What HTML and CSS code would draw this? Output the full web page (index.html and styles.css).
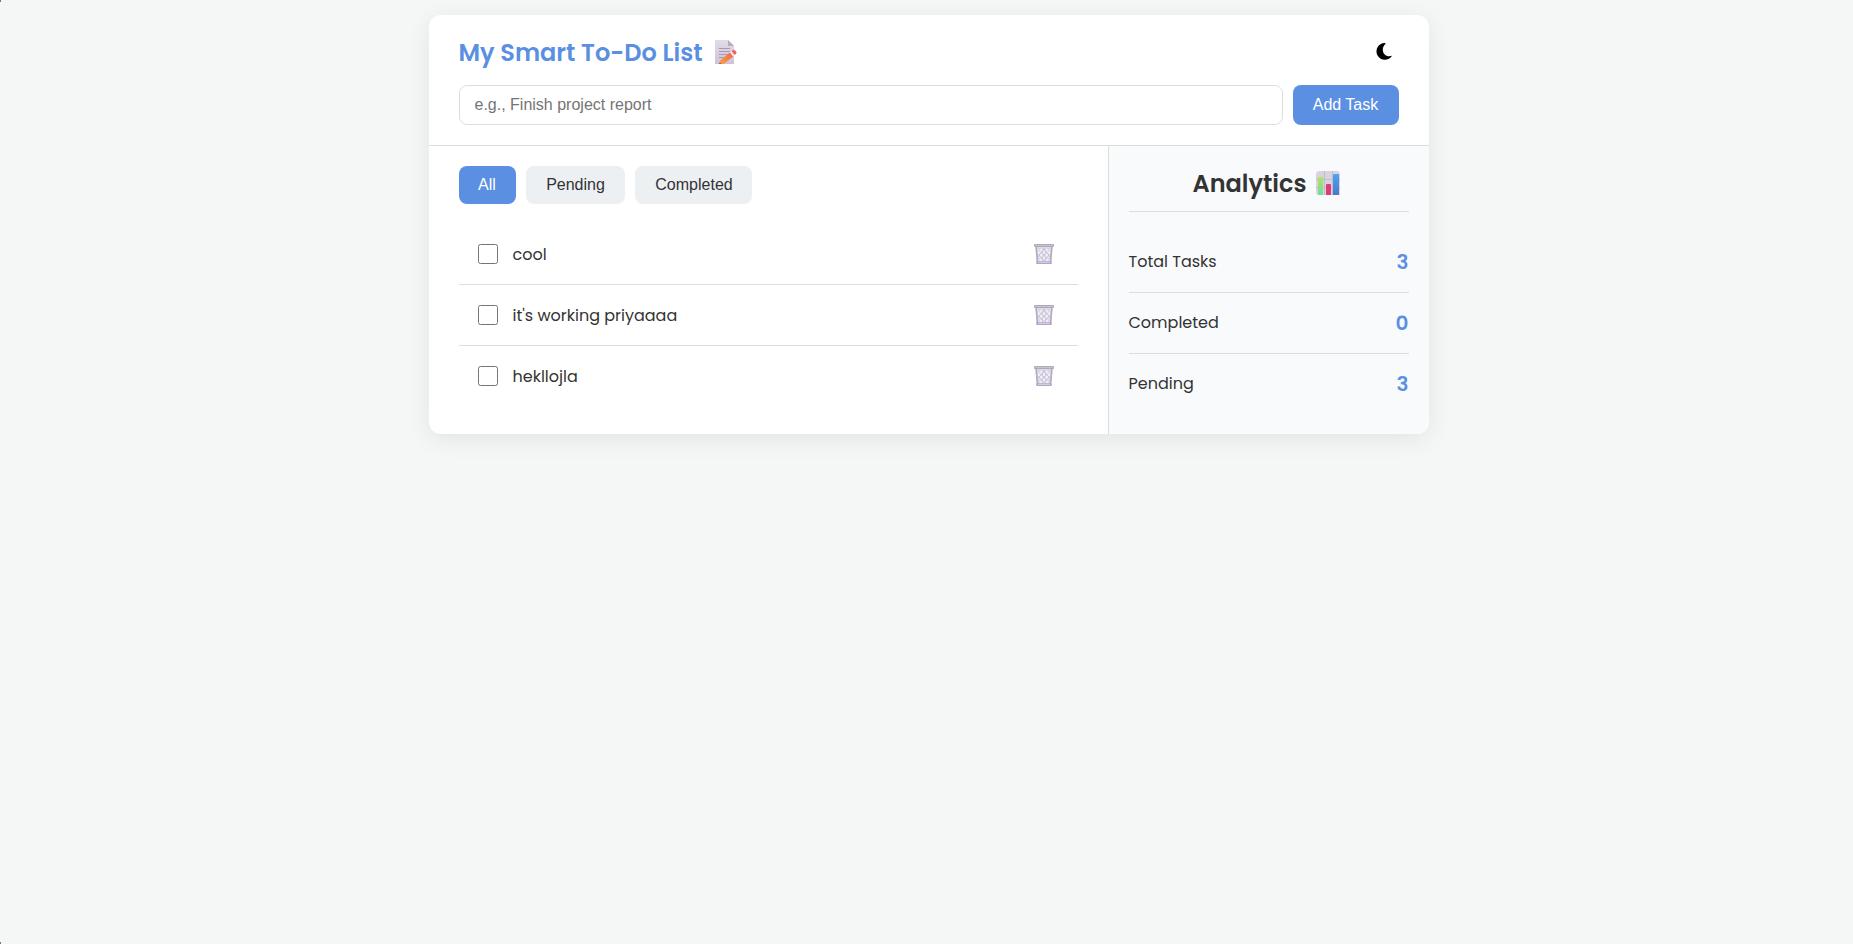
FILE: index.html
```html
<!DOCTYPE html>
<html lang="en">
<head>
<meta charset="utf-8">
<title>My Smart To-Do List</title>
<link rel="stylesheet" href="styles.css">
</head>
<body>
<svg width="0" height="0" class="defs">
  <defs>
    <symbol id="trash" viewBox="0 0 20 20">
      <path d="M1.300 2h17.400l-1.500 16.300q-.1 1.200-1.100 1.200H3.900q-1 0-1.100-1.200z" fill="#dfdbea"/>
      <path d="M2.200 3 3.500 18M17.800 3 16.500 18" stroke="#b3adbe" stroke-width="1.700"/>
      <path d="M5.500 4l8 13M9.500 4l6 8.500M4.500 9l5 8.500M14.500 4l-8 13M10.500 4l-6 8.500M15.500 9l-5 8.500" stroke="#c3bdd2" stroke-width=".8"/>
      <path d="M7 5v2.500M7 10v2.500M7 15v2M10 7.500V10M10 12.500V15M13 5v2.500M13 10v2.500M13 15v2M4.800 7.500V10M15.200 7.500V10" stroke="#fff" stroke-width="1.200"/>
      <rect x="0" y="0" width="20" height="2.900" rx=".8" fill="#aea9b6"/>
      <rect x="1" y=".9" width="18" height="1" fill="#c9c6cc"/>
      <rect x="2.200" y="17.300" width="15.600" height="2.700" rx=".8" fill="#b3a3c8"/>
      <path d="M4 18.300h12" stroke="#dcd6e6" stroke-width="1"/>
    </symbol>
  </defs>
</svg>
<main class="card">
  <header class="header">
    <div class="title-row">
      <h1 class="title"><span class="title-text">My Smart To-Do List</span>
        <svg class="memo" viewBox="0 0 22 24">
          <defs>
            <linearGradient id="paper" x1="0" x2="0" y1="0" y2="1"><stop offset="0" stop-color="#e1dbe7"/><stop offset="1" stop-color="#cfc3db"/></linearGradient>
            <linearGradient id="pencil" x1="0" x2="1" y1="1" y2="0"><stop offset="0" stop-color="#ffa04a"/><stop offset="1" stop-color="#ee673e"/></linearGradient>
          </defs>
          <path d="M0 0h13l6 6v18H0z" fill="url(#paper)"/>
          <path d="M13 0l6 6h-6z" fill="#b8acc5"/>
          <path d="M4 8.500h11M4 11.500h11M4 14.500h9M4 17.500h6" stroke="#a69cb1" stroke-width="1"/>
          <path d="M5.300 20.300 15 12.500l3.200 4-9.500 7.500H4.400z" fill="url(#pencil)"/>
          <path d="M15 12.500l1.700-1.300 3.100 3.900-1.600 1.400z" fill="#eee3ee"/>
          <path d="M16.700 11.200l1.500-1.200q1-.6 1.900.4l1.100 1.400q.8 1.100-.1 1.900l-1.300 1.400z" fill="#f5615c"/>
          <path d="M4 24l.7-1.800 1.900 1.800z" fill="#9c5a48"/>
        </svg>
      </h1>
      <button class="theme" aria-label="Toggle theme">
        <svg class="moon" viewBox="0 0 16 17"><path d="M8.600 0A8.400 8.400 0 1 0 16 12.800C8 15.500 3.500 6 9.800.6Q10 0 8.600 0z"/></svg>
      </button>
    </div>
    <div class="add-row">
      <input class="field" type="text" placeholder="e.g., Finish project report">
      <button class="btn add">Add Task</button>
    </div>
  </header>
  <div class="content">
    <section class="tasks">
      <div class="filters">
        <button class="btn all active">All</button>
        <button class="btn pending">Pending</button>
        <button class="btn completed">Completed</button>
      </div>
      <ul class="list">
        <li class="row task"><input class="check" type="checkbox"><span class="name">cool</span><svg class="trash"><use href="#trash"/></svg></li>
        <li class="row task"><input class="check" type="checkbox"><span class="name">it's working priyaaaa</span><svg class="trash"><use href="#trash"/></svg></li>
        <li class="row task"><input class="check" type="checkbox"><span class="name">hekllojla</span><svg class="trash"><use href="#trash"/></svg></li>
      </ul>
    </section>
    <aside class="analytics">
      <h2 class="subtitle"><span class="subtitle-text">Analytics</span>
        <svg class="chart" viewBox="0 0 24 24">
          <defs>
            <linearGradient id="green" x1="0" x2="0" y1="0" y2="1"><stop offset="0" stop-color="#b2e55b"/><stop offset="1" stop-color="#70dda0"/></linearGradient>
            <linearGradient id="blue" x1="0" x2="0" y1="0" y2="1"><stop offset="0" stop-color="#4ba7f0"/><stop offset="1" stop-color="#4878cc"/></linearGradient>
          </defs>
          <path d="M3.500 0h17Q24 0 24 3.500V24H1.500Q0 23 0 20.500v-17Q0 0 3.500 0z" fill="#d9d2df"/>
          <path d="M8.500 0v24M16.500 0v24M0 8.500h24M0 16.500h24" stroke="#c3bacb" stroke-width="1"/>
          <path d="M2 7q0-1 1-1h3q1 0 1 1v17H2z" fill="url(#green)"/>
          <path d="M10 14q0-1 1-1h3q1 0 1 1v10h-5z" fill="#dd3d72"/>
          <path d="M17 4q0-1 1-1h4q1 0 1 1v20h-6z" fill="url(#blue)"/>
        </svg>
      </h2>
      <div class="row stat"><span>Total Tasks</span><b class="num">3</b></div>
      <div class="row stat"><span>Completed</span><b class="num">0</b></div>
      <div class="row stat"><span>Pending</span><b class="num">3</b></div>
    </aside>
  </div>
</main>
</body>
</html>
```
FILE: styles.css
```css
* { box-sizing: border-box; }
body {
  margin: 0;
  min-height: 944px;
  padding: 15px 0 0 4px;
  background: #f4f7f6;
  color: #333;
  font: 16px/24px Poppins, Inter, sans-serif;
}
/* dark window corners at the left edge */
body::before, body::after {
  content: "";
  position: absolute;
  left: 0;
  width: 1px;
  height: 2px;
  background: #777;
}
body::before { top: 0; }
body::after { bottom: 0; }
.defs { display: none; }
.card {
  width: 1000px;
  height: 419px;
  margin: 0 auto;
  display: flex;
  flex-direction: column;
  background: #fff;
  border-radius: 12px;
  box-shadow: 0 5px 25px rgba(0, 0, 0, .08);
  overflow: hidden;
}
.header {
  padding: 20px 30px;
  height: 131px;
  border-bottom: 1px solid #ddd;
}
.title-row { display: flex; justify-content: space-between; height: 50px; }
.title, .subtitle { margin: 0; display: flex; font-size: 24px; line-height: 36px; font-weight: 600; }
.title { color: #5a8fe2; }
.title-text { width: 256px; white-space: nowrap; }
.memo { width: 22px; height: 24px; margin-top: 5px; }
.theme { border: 0; background: none; padding: 8px 7px 0 0; display: flex; align-items: flex-start; }
.moon { width: 16px; height: 17px; }
.add-row { display: flex; gap: 10px; }
.field {
  flex: 1;
  height: 40px;
  padding: 0 15px;
  border: 1px solid #ddd;
  border-radius: 8px;
  font: 16px "Liberation Sans", Arial, sans-serif;
}
.btn {
  border: 0;
  border-radius: 8px;
  background: #edf0f3;
  color: #333;
  font: 16px "Liberation Sans", Arial, sans-serif;
  padding: 0 0 1px;
}
.btn.add { width: 106px; background: #5a8fe2; color: #fff; }
.content { flex: 1; display: flex; }
.tasks { flex: 1; padding: 20px 30px; }
.filters { display: flex; gap: 10px; height: 38px; margin-bottom: 20px; }
.all { width: 57px; }
.pending { width: 99px; padding-left: 1px; }
.completed { width: 117px; padding-left: 2px; }
.btn.active { background: #5a8fe2; color: #fff; }
.list { list-style: none; margin: 0; padding: 0; }
.row { display: flex; align-items: center; height: 61px; border-bottom: 1px solid #ddd; }
.row:last-child { border-bottom: 0; height: 60px; }
.task { padding: 0 24px 0 19px; }
.check { width: 20px; height: 20px; margin: 0 15px 0 0; }
.name { flex: 1; white-space: nowrap; padding-top: 2px; }
.trash { width: 20px; height: 20px; }
.analytics { width: 321px; padding: 20px; border-left: 1px solid #ddd; background: #f9fafc; }
.subtitle { justify-content: center; height: 46px; padding-right: 5px; border-bottom: 1px solid #ddd; margin-bottom: 20px; }
.subtitle-text { width: 123px; }
.chart { width: 24px; height: 24px; margin-top: 5px; }
.stat { justify-content: space-between; }
.num { font-size: 20px; font-weight: 600; color: #5a8fe2; }
```
